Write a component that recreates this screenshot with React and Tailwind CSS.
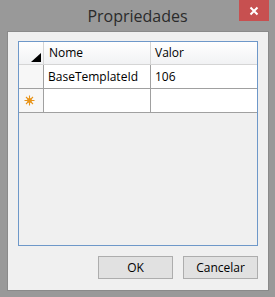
export default function App() {
  const font = { fontFamily: '"Segoe UI", "Open Sans", "Noto Sans", sans-serif' };
  return (
    <div className="w-[275px] h-[297px] bg-[#999999] flex flex-col" style={font}>
      <div className="h-[31px] flex relative">
        <div className="flex-1 flex items-center justify-center text-[16px] text-[#2b2b2b] pt-[1px]">Propriedades</div>
        <div className="absolute right-[6px] top-0 w-[30px] h-[21px] bg-[#c75050] flex items-center justify-center">
          <svg width="10" height="10" viewBox="0 0 10 10">
            <path d="M1.5 1.5 L8.5 8.5 M8.5 1.5 L1.5 8.5" stroke="white" strokeWidth="2" />
          </svg>
        </div>
      </div>
      <div className="ml-[7px] mr-[6px] h-[260px] border border-[#8a8a8a] bg-[#f0f0f0] px-[10px] pt-[9px] flex flex-col">
        <div className="w-[240px] h-[205px] border border-[#6e98c9] bg-[#f0f0f0] flex flex-col text-[12px] text-black">
          <div className="flex h-[23px] border-b border-[#d5d5d5] bg-gradient-to-b from-white to-[#f1f2f4]">
            <div className="w-[25px] border-r border-[#d5d5d5] flex items-end justify-end pr-[2px] pb-[2px]">
              <svg width="10" height="9" viewBox="0 0 10 9"><path d="M10 0 L10 9 L0 9 Z" fill="#000" /></svg>
            </div>
            <div className="w-[107px] border-r border-[#d5d5d5] pl-[5px] flex items-center">Nome</div>
            <div className="flex-1 pl-[4px] flex items-center">Valor</div>
          </div>
          <div className="flex h-[24px] border-b border-[#a0a0a0]">
            <div className="w-[25px] border-r border-[#a0a0a0] bg-[#f7f7f7]"></div>
            <div className="w-[107px] border-r border-[#a0a0a0] bg-white pl-[4px] flex items-center">BaseTemplateId</div>
            <div className="flex-1 bg-white pl-[4px] flex items-center">106</div>
          </div>
          <div className="flex h-[24px] border-b border-[#a0a0a0]">
            <div className="w-[25px] border-r border-[#a0a0a0] bg-[#f7f7f7] flex items-center justify-center pr-[4px]">
              <svg width="11" height="11" viewBox="0 0 11 11">
                <path d="M5.5 0.5 V10.5 M0.5 5.5 H10.5 M2 2 L9 9 M9 2 L2 9" stroke="#e8941a" strokeWidth="1.1" />
                <circle cx="5.5" cy="5.5" r="2" fill="none" stroke="#e8941a" strokeWidth="1" />
              </svg>
            </div>
            <div className="w-[107px] border-r border-[#a0a0a0] bg-white"></div>
            <div className="flex-1 bg-white"></div>
          </div>
        </div>
        <div className="flex justify-end gap-[10px] mt-[10px]">
          <button className="w-[75px] h-[23px] bg-[#e1e1e1] border border-[#adadad] text-[12px] text-black">OK</button>
          <button className="w-[75px] h-[23px] bg-[#e1e1e1] border border-[#adadad] text-[12px] text-black">Cancelar</button>
        </div>
      </div>
    </div>
  );
}
